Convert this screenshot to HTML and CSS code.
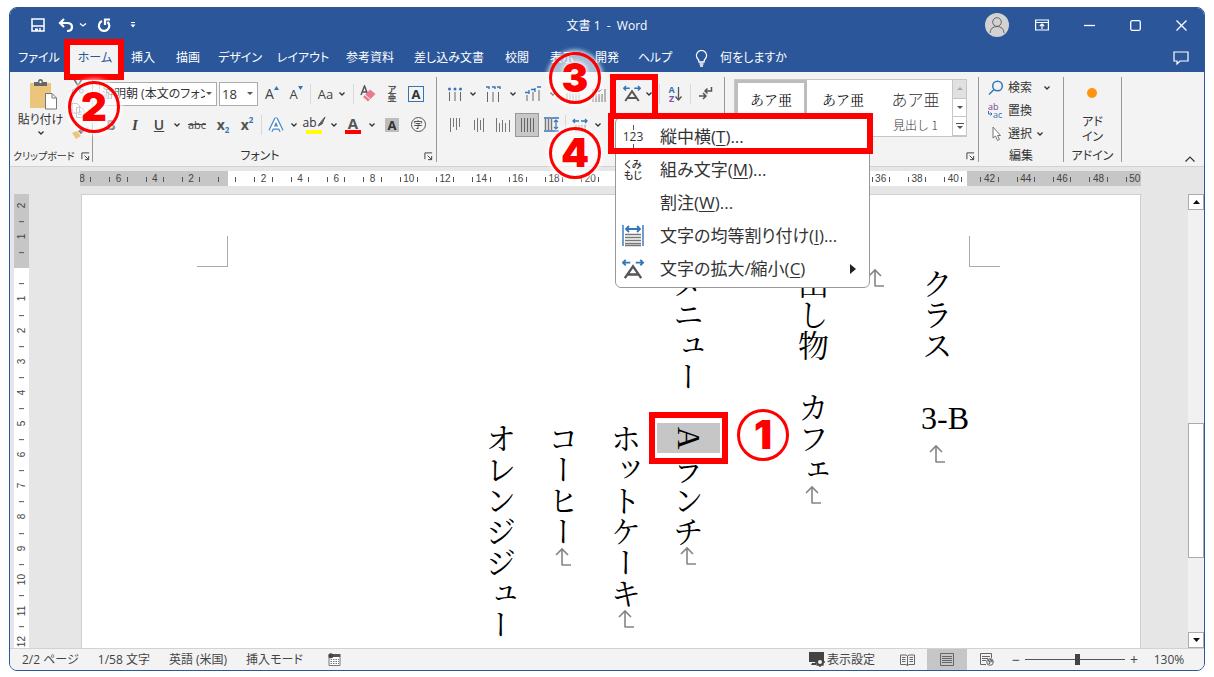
FILE: index.html
```html
<!DOCTYPE html>
<html lang="ja">
<head>
<meta charset="utf-8">
<title>文書 1 - Word</title>
<link rel="stylesheet" href="styles.css">
</head>
<body>
<svg class="defs" aria-hidden="true">
  <symbol id="chev" viewBox="0 0 8 6"><path d="M1.500 1.500L4 4L6.500 1.500" fill="none" stroke="#333" stroke-width="1.300"/></symbol>
  <symbol id="launch" viewBox="0 0 10 10"><path d="M1 8V1H9M4 4L8.500 8.500M8.500 4.500V8.500H4.500" fill="none" stroke="#444" stroke-width="1.100"/></symbol>
  <symbol id="mark" viewBox="0 0 18 20"><path d="M8 18V2M2 8L8 2L14 8M7.500 18H17" fill="none" stroke="#858585" stroke-width="1.600"/></symbol>
  <symbol id="wide" viewBox="0 0 24 22"><path d="M1 4H9M4 1L1 4L4 7M15 4H23M20 1L23 4L20 7" fill="none" stroke="#3375b8" stroke-width="2"/><path d="M3 21L12 8L21 21M6.500 17H17.500" fill="none" stroke="#555" stroke-width="2.600"/></symbol>
</svg>
<div class="window">
  <header class="titlebar">
    <div class="quick">
      <button aria-label="上書き保存"><svg width="14" height="14" viewBox="0 0 14 14" fill="none" stroke="#fff" stroke-width="1.500"><path d="M1 1H13V13H1ZM1 8H13"/><path d="M4 10.500H7V13H4Z" fill="#fff" stroke="none"/><path d="M9 10V13"/></svg></button>
      <button class="undo" aria-label="元に戻す"><svg width="16" height="14" viewBox="0 0 16 14" fill="none" stroke="#fff" stroke-width="2.200"><path d="M6 1L2 5L6 9M2 5H9Q14 5 14 9Q14 13 9 13"/></svg></button>
      <svg class="qchev" width="8" height="6" viewBox="0 0 8 6"><path d="M1 1.500L4 4L7 1.500" fill="none" stroke="#fff" stroke-width="1.300"/></svg>
      <button class="redo" aria-label="繰り返し"><svg width="14" height="15" viewBox="0 0 14 15" fill="none" stroke="#fff" stroke-width="2.200"><path d="M5 3A5.200 5.200 0 1 0 10.500 3.800M13 1.500H8V7"/></svg></button>
      <button class="custom" aria-label="クイック アクセスのカスタマイズ"><svg width="6" height="6" viewBox="0 0 6 6"><path d="M1 .5H5" stroke="#fff"/><path d="M.5 2.500H5.500L3 5.500Z" fill="#fff"/></svg></button>
    </div>
    <h1 class="doctitle">文書 1&nbsp; -&nbsp; Word</h1>
    <div class="wincontrols">
      <button class="avatar" aria-label="アカウント"><svg width="24" height="24" viewBox="0 0 24 24"><circle cx="12" cy="12" r="12" fill="#d2d2d2"/><circle cx="12" cy="9" r="4.300" fill="none" stroke="#666"/><path d="M5 20Q5.500 13.500 12 13.500T19 20" fill="none" stroke="#666"/></svg></button>
      <button aria-label="リボンの表示オプション"><svg width="14" height="12" viewBox="0 0 14 12" fill="none" stroke="#fff" stroke-width="1.200"><path d="M.6 1H13.400V11H.6ZM.6 3.500H13.400M7 10V5M4.800 7L7 5L9.200 7"/></svg></button>
      <button aria-label="最小化"><svg width="11" height="11" viewBox="0 0 11 11"><path d="M0 5.500H11" stroke="#fff" stroke-width="1.300"/></svg></button>
      <button aria-label="最大化"><svg width="11" height="11" viewBox="0 0 11 11"><rect x=".7" y=".7" width="9.600" height="9.600" rx="1.500" fill="none" stroke="#fff" stroke-width="1.300"/></svg></button>
      <button aria-label="閉じる"><svg width="11" height="11" viewBox="0 0 11 11"><path d="M.5 .5L10.500 10.500M10.500 .5L.5 10.500" stroke="#fff" stroke-width="1.300"/></svg></button>
    </div>
  </header>

  <nav class="tabs">
    <button>ファイル</button><button class="active">ホーム</button><button>挿入</button><button>描画</button><button>デザイン</button><button>レイアウト</button><button>参考資料</button><button>差し込み文書</button><button>校閲</button><button>表示</button><button>開発</button><button>ヘルプ</button>
    <button class="tell"><svg width="13" height="17" viewBox="0 0 13 17" fill="none" stroke="#fff" stroke-width="1.300"><path d="M4 12Q4 10 2.500 8.500A5 5 0 1 1 10.500 8.500Q9 10 9 12ZM4.500 14H8.500M5 16H8"/></svg>何をしますか</button>
    <button class="comment" aria-label="コメント"><svg width="16" height="14" viewBox="0 0 16 14" fill="none" stroke="#fff" stroke-width="1.200"><path d="M1 1H15V10H7L4 13V10H1Z"/></svg></button>
  </nav>

  <div class="ribbon">
    <section class="group clipboard">
      <div class="body">
        <button class="paste"><svg width="29" height="31" viewBox="0 0 29 31"><path d="M1 4H22V29H1Z" fill="#ecc57c"/><path d="M5 3H9Q9 0 11.500 0T14 3H18V7H5Z" fill="#666"/><circle cx="11.500" cy="3" r="1.200" fill="#f3f3f3"/><path d="M16.500 14.500H23L27.500 19V30H16.500Z" fill="#fff" stroke="#777"/><path d="M23 14.500V19H27.500" fill="none" stroke="#777"/></svg><span>貼り付け</span><svg class="chev"><use href="#chev"/></svg></button>
        <div class="clipside">
          <button aria-label="切り取り"><svg width="14" height="15" viewBox="0 0 14 15" fill="none"><path d="M3 0L9 10M11 0L5 10" stroke="#666" stroke-width="1.500"/><circle cx="3.500" cy="12" r="2" stroke="#3375b8"/><circle cx="10.500" cy="12" r="2" stroke="#3375b8"/></svg></button>
          <button aria-label="コピー"><svg width="14" height="15" viewBox="0 0 14 15" fill="#fff" stroke="#777"><path d="M1 .5H6L8.500 3V10H1ZM5.500 4.500H10L13 7.500V14.500H5.500Z"/><path d="M7.500 9H11M7.500 11.500H11" stroke="#3375b8"/></svg></button>
          <button aria-label="書式のコピー/貼り付け"><svg width="14" height="13" viewBox="0 0 14 13"><path d="M1 6L6 4L10 9L5 12Z" fill="#ecc57c"/><path d="M7 4L12 0L14 3L10 7Z" fill="#555"/></svg></button>
        </div>
      </div>
      <footer><span>クリップボード</span><svg class="launch"><use href="#launch"/></svg></footer>
    </section>

    <section class="group font">
      <div class="body rows">
        <div class="row">
          <select class="fname" aria-label="フォント"><option>游明朝 (本文のフォント)</option></select>
          <select class="fsize" aria-label="フォント サイズ"><option>18</option></select>
          <button class="t w24" aria-label="フォント サイズの拡大">A<svg class="car" width="5" height="4"><path d="M0 4L2.500 0L5 4Z" fill="#3375b8"/></svg></button>
          <button class="t w24 small" aria-label="フォント サイズの縮小">A<svg class="car" width="5" height="4"><path d="M0 0L2.500 4L5 0Z" fill="#3375b8"/></svg></button>
          <i class="sep"></i>
          <button class="t w38">Aa<svg class="chev"><use href="#chev"/></svg></button>
          <i class="sep"></i>
          <button class="w24" aria-label="書式のクリア"><svg width="16" height="18" viewBox="0 0 16 18"><path d="M1 10L4.500 1L8 10M2.500 7H6.500" fill="none" stroke="#555" stroke-width="1.500"/><path d="M3 12L10 4.500L15.500 9L8 16.500Z" fill="#e67c8c"/><path d="M5 10L10.500 14.500" stroke="#fff"/></svg></button>
          <button class="ruby w24" aria-label="ルビ"><span>ア</span><span>亜</span></button>
          <button class="w24" aria-label="囲み線"><span class="boxa">A</span></button>
        </div>
        <div class="row">
          <button class="t b w24">B</button><button class="t it w24">I</button><button class="t un w24">U</button><svg class="chev c12"><use href="#chev"/></svg>
          <button class="t st w28">abc</button><button class="t b w24">x<sub>2</sub></button><button class="t b w24">x<sup>2</sup></button>
          <i class="sep"></i>
          <button class="w24" aria-label="文字の効果"><svg width="16" height="16" viewBox="0 0 16 16"><path d="M2.500 14L8 2.500L13.500 14M5 10.500H11" fill="none" stroke="#4c88ca" stroke-width="4.500" stroke-linejoin="round"/><path d="M2.500 14L8 2.500L13.500 14M5 10.500H11" fill="none" stroke="#fff" stroke-width="2"/></svg></button><svg class="chev c12"><use href="#chev"/></svg>
          <button class="colorbtn w28 yellow">ab<svg width="9" height="11" viewBox="0 0 9 11"><path d="M8 1L3 7L1 10L5 8Z" fill="#666" stroke="#555"/></svg></button><svg class="chev c12"><use href="#chev"/></svg>
          <button class="colorbtn w26 red">A</button><svg class="chev c12"><use href="#chev"/></svg>
          <button class="w28" aria-label="文字の網かけ"><span class="shade">A</span></button>
          <button class="w24" aria-label="囲い文字"><span class="circ">字</span></button>
        </div>
      </div>
      <footer><span>フォント</span><svg class="launch"><use href="#launch"/></svg></footer>
    </section>

    <section class="group para">
      <div class="body rows">
        <div class="row">
          <button class="w24" aria-label="箇条書き"><svg width="16" height="14" viewBox="0 0 16 14"><path d="M2.500 5V14M8 5V14M13.500 5V14" stroke="#666"/><g fill="#3375b8"><circle cx="2.500" cy="2" r="1.500"/><circle cx="8" cy="2" r="1.500"/><circle cx="13.500" cy="2" r="1.500"/></g></svg></button><svg class="chev c12"><use href="#chev"/></svg>
          <button class="w28" aria-label="段落番号"><svg width="16" height="16" viewBox="0 0 16 16"><path d="M2.500 6V16M8 6V16M13.500 6V16" stroke="#666"/><path d="M1 1H4V3M7 1H10V3M12 1H15V3" fill="none" stroke="#3375b8" stroke-width="1.400"/></svg></button><svg class="chev c12"><use href="#chev"/></svg>
          <button class="w28" aria-label="アウトライン"><svg width="17" height="15" viewBox="0 0 17 15"><path d="M2 9V15M8 6V15M14 4V15" stroke="#666"/><path d="M0 6.500H4M6 3.500H10M12 1H16M4 4V8M10 2V6" stroke="#3375b8" stroke-width="1.300"/></svg></button><svg class="chev c12"><use href="#chev"/></svg>
          <button class="w28" aria-label="インデントを減らす"><svg width="16" height="16" viewBox="0 0 16 16"><path d="M2 7V16M5 7V16M8 7V16M11 7V16M14 7V16" stroke="#777"/><path d="M8 6V0M5.500 2.500L8 0L10.500 2.500" fill="none" stroke="#3375b8"/></svg></button>
          <button class="w24" aria-label="インデントを増やす"><svg width="16" height="16" viewBox="0 0 16 16"><path d="M2 3V16M5 8V16M8 8V16M11 8V16M14 3V16" stroke="#777"/><path d="M8 0V6M5.500 3.500L8 6L10.500 3.500" fill="none" stroke="#3375b8"/></svg></button>
          <button class="scale" aria-label="拡張書式"><svg width="18" height="17"><use href="#wide"/></svg><svg class="chev"><use href="#chev"/></svg></button>
          <i class="sep"></i>
          <button class="w26" aria-label="並べ替え"><span class="az"><span>A</span><span>Z</span></span><svg width="7" height="14" viewBox="0 0 7 14"><path d="M3.500 0V13M.5 9.500L3.500 13L6.500 9.500" fill="none" stroke="#555" stroke-width="1.300"/></svg></button>
          <i class="sep"></i>
          <button class="w24" aria-label="編集記号の表示"><svg width="15" height="13" viewBox="0 0 15 13"><path d="M13.500 0V4H7M9.500 1.500L7 4L9.500 6.500M1 9H8M5 6L8 9L5 12" fill="none" stroke="#555" stroke-width="1.500"/></svg></button>
        </div>
        <div class="row">
          <button class="w24" aria-label="上揃え"><svg width="10" height="14"><path d="M.5 0V14M3.500 0V9M6.500 0V12M9.500 0V9" stroke="#777"/></svg></button>
          <button class="w24" aria-label="上下中央揃え"><svg width="10" height="14"><path d="M.5 2V12M3.500 0V14M6.500 2V12M9.500 0V14" stroke="#777"/></svg></button>
          <button class="w24" aria-label="下揃え"><svg width="14" height="14"><path d="M.5 0V14M3.500 5V14M6.500 2V14M9.500 5V14M13.500 2V14" stroke="#777"/></svg></button>
          <button class="w24 on" aria-label="両端揃え"><svg width="13" height="14"><path d="M.5 0V14M3.500 0V14M6.500 0V14M9.500 0V14M12.500 0V14" stroke="#666"/></svg></button>
          <button class="w24" aria-label="均等割り付け"><svg width="15" height="15" viewBox="0 0 15 15"><path d="M0 1H15M0 14H15" stroke="#3375b8" stroke-width="1.400"/><path d="M1.500 2V13M4.500 2V13M7.500 2V13" stroke="#777" stroke-width="1.500"/><path d="M12 3V12M10 5L12 3L14 5M10 10L12 12L14 10" fill="none" stroke="#3375b8" stroke-width="1.200"/></svg></button>
          <i class="sep"></i>
          <button class="w24" aria-label="行と段落の間隔"><svg width="16" height="14" viewBox="0 0 16 14"><path d="M1 3H7M3 1L1 3L3 5M9 3H15M13 1L15 3L13 5" fill="none" stroke="#3375b8" stroke-width="1.300"/><path d="M4 7V14M7 7V14M10 7V14M13 7V14" stroke="#777"/></svg></button><svg class="chev c12"><use href="#chev"/></svg>
        </div>
      </div>
    </section>

    <section class="group styles">
      <div class="body">
        <div class="gallery">
          <button class="sel">あア亜</button>
          <button>あア亜</button>
          <button class="head">あア亜<small>見出し 1</small></button>
          <div class="gscroll">
            <button class="off" aria-label="前の行"><svg width="6" height="3"><path d="M0 3L3 0L6 3Z" fill="#aaa"/></svg></button>
            <button aria-label="次の行"><svg width="6" height="3"><path d="M0 0L3 3L6 0Z" fill="#555"/></svg></button>
            <button aria-label="その他"><svg width="8" height="7"><path d="M0 .5H8" stroke="#555"/><path d="M1 3H7L4 6Z" fill="#555"/></svg></button>
          </div>
        </div>
      </div>
      <footer><span></span><svg class="launch"><use href="#launch"/></svg></footer>
    </section>

    <section class="group edit">
      <div class="body list">
        <button><svg width="16" height="16" viewBox="0 0 16 16" fill="none" stroke="#3375b8" stroke-width="1.500"><circle cx="9.500" cy="6" r="4.800"/><path d="M6 9.500L1 14.500"/></svg>検索<svg class="chev far"><use href="#chev"/></svg></button>
        <button><span class="rep"><span>ab</span><span><svg width="5" height="5"><path d="M.5 0V3H4M2.500 1.500L4 3L2.500 4.500" fill="none" stroke="#3375b8"/></svg>ac</span></span>置換</button>
        <button><svg width="16" height="16" viewBox="0 0 16 16"><path d="M5 1V12L7.500 10L9.500 14.500L11.500 13.500L9.500 9.500H12.500Z" fill="#fff" stroke="#777"/></svg>選択<svg class="chev"><use href="#chev"/></svg></button>
      </div>
      <footer><span>編集</span></footer>
    </section>

    <section class="group addin">
      <div class="body"><button><svg width="12" height="12"><circle cx="6" cy="6" r="5" fill="#ff9410"/></svg><span>アド<br>イン</span></button></div>
      <footer><span>アドイン</span></footer>
    </section>
    <button class="collapse" aria-label="リボンを折りたたむ"><svg width="10" height="6"><path d="M.5 5.500L5 1L9.500 5.500" fill="none" stroke="#333" stroke-width="1.200"/></svg></button>
  </div>

  <div class="hruler"><div class="scaleh"><div class="hcells">
    <span>8</span><span>6</span><span>4</span><span>2</span><span></span><span>2</span><span>4</span><span>6</span><span>8</span><span>10</span><span>12</span><span>14</span><span>16</span><span>18</span><span>20</span><span></span><span></span><span></span><span></span><span></span><span></span><span></span><span>36</span><span>38</span><span>40</span><span>42</span><span>44</span><span>46</span><span>48</span><span>50</span>
  </div></div></div>

  <div class="workspace">
    <div class="vruler"><div class="vcells">
      <span>2</span><span>1</span><span></span><span>1</span><span>2</span><span>3</span><span>4</span><span>5</span><span>6</span><span>7</span><span>8</span><span>9</span><span>10</span><span>11</span><span>12</span>
    </div></div>
    <main class="page">
      <i class="crop cl"></i>
      <article class="text">
        <p>クラス　<span class="tcy">3-B</span><svg class="mark"><use href="#mark"/></svg></p>
        <p><svg class="mark"><use href="#mark"/></svg></p>
        <p>出し物　カフェ<svg class="mark"><use href="#mark"/></svg></p>
        <p></p>
        <p>メニュー　<span class="hl">A</span>ランチ<svg class="mark"><use href="#mark"/></svg></p>
        <p>　　　　　ホットケーキ<svg class="mark"><use href="#mark"/></svg></p>
        <p>　　　　　コーヒー<svg class="mark"><use href="#mark"/></svg></p>
        <p>　　　　　オレンジジュー</p>
      </article>
      <i class="crop cr"></i>
    </main>
    <div class="scrollbar">
      <button aria-label="上へ"><svg width="7" height="4"><path d="M0 4L3.500 0L7 4Z" fill="#111"/></svg></button>
      <div class="track"><div class="thumb"></div></div>
      <button aria-label="下へ"><svg width="7" height="4"><path d="M0 0L3.500 4L7 0Z" fill="#111"/></svg></button>
    </div>
  </div>

  <footer class="status">
    <span>2/2 ページ</span><span>1/58 文字</span><span>英語 (米国)</span><span>挿入モード</span>
    <svg class="macro" width="13" height="13" viewBox="0 0 13 13"><path d="M1 4V12.500H12V4" fill="#fff" stroke="#777"/><path d="M5 1H12.500V4H5Z" fill="#555"/><circle cx="2.800" cy="2.800" r="2.500" fill="#444"/><path d="M2.500 6.500H11M2.500 8.500H11M2.500 10.500H11" stroke="#777" stroke-dasharray="1.500 1"/></svg>
    <button class="disp"><svg width="16" height="15" viewBox="0 0 16 15"><path d="M0 0H15V10H0ZM3 11H7V13H2Z" fill="#444"/><circle cx="11" cy="10" r="3" fill="#f3f3f3" stroke="#444" stroke-width="2"/><path d="M11 5V7M11 13V15M6 10H8M14 10H16M7.500 6.500L9 8M13 12L14.500 13.500M14.500 6.500L13 8M9 12L7.500 13.500" stroke="#444" stroke-width="1.400"/></svg>表示設定</button>
    <button class="view" aria-label="閲覧モード"><svg width="15" height="12" viewBox="0 0 15 12" fill="none" stroke="#666"><path d="M.5 1H6L7.500 2L9 1H14.500V10.500H9L7.500 11.500L6 10.500H.5ZM7.500 2V11.500M2 3.500H5.500M2 5.500H5.500M2 7.500H5.500M9.500 3.500H13M9.500 5.500H13M9.500 7.500H13"/></svg></button>
    <button class="view cur" aria-label="印刷レイアウト"><svg width="14" height="13" fill="none" stroke="#666"><path d="M.5 .5H13.500V12.500H.5ZM2 3.500H12M2 5.500H12M2 7.500H12M2 9.500H12"/></svg></button>
    <button class="view" aria-label="Web レイアウト"><svg width="14" height="13" viewBox="0 0 14 13" fill="none" stroke="#666"><path d="M6 11.500H.5V.5H11.500V5M2 3.500H10M2 5.500H8M2 7.500H6"/><circle cx="10" cy="9" r="3.300" fill="#f3f3f3"/><path d="M8 7L10 9L9 11M10 6L12.500 9" stroke-width="1.300"/></svg></button>
    <button class="pm" aria-label="縮小">−</button>
    <input class="zoom" type="range" min="0" max="100" value="53" aria-label="ズーム">
    <button class="pm" aria-label="拡大">+</button>
    <button class="pct">130%</button>
  </footer>

  <div class="menu" role="menu">
    <button role="menuitem"><span class="ic n123">123</span>縦中横(<u>T</u>)...</button>
    <button role="menuitem"><span class="ic kumi">くみ<br>もじ</span>組み文字(<u>M</u>)...</button>
    <button role="menuitem"><span class="ic"></span>割注(<u>W</u>)...</button>
    <button role="menuitem"><span class="ic"><svg width="22" height="22" viewBox="0 0 22 22"><path d="M1 0V21M21 0V21" stroke="#3375b8" stroke-width="1.400"/><path d="M4 4H18M7 1L4 4L7 7M15 1L18 4L15 7" fill="none" stroke="#3375b8" stroke-width="1.800"/><path d="M3 9.500H19M3 12.500H19M3 15.500H19M3 18.500H19M3 20.500H19" stroke="#777" stroke-width="1.300"/></svg></span>文字の均等割り付け(<u>I</u>)...</button>
    <button role="menuitem"><span class="ic"><svg width="22" height="20"><use href="#wide"/></svg></span>文字の拡大/縮小(<u>C</u>)<svg class="sub" width="6" height="10"><path d="M0 0L6 5L0 10Z" fill="#222"/></svg></button>
  </div>

  <div class="frame f1"></div><div class="frame f2"></div><div class="frame f3"></div><div class="frame f4"></div>
  <div class="num n1">1</div><div class="num n2">2</div><div class="num n3">3</div><div class="num n4">4</div>
</div>
</body>
</html>
```

FILE: styles.css
```css
* { box-sizing: border-box; }
html, body { height: 100%; }
body {
  margin: 0;
  padding: 7px 9px 6px;
  background: #fff;
  color: #333;
  font: 12px/16px "Open Sans", "Noto Sans CJK JP", sans-serif;
  font-feature-settings: "palt";
}
.defs { position: absolute; width: 0; height: 0; }
button { border: 0; padding: 0; margin: 0; background: none; color: inherit; font: inherit; font-feature-settings: inherit; white-space: nowrap; }
svg { flex: none; display: block; }

.window {
  position: relative;
  display: flex;
  flex-direction: column;
  height: 100%;
  border: 1px solid #2b579a;
  border-radius: 8px;
  background: #e6e6e6;
}

/* title bar */
.titlebar { display: grid; grid-template-columns: 1fr auto 1fr; align-items: center; height: 34px; background: #2b579a; color: #fff; border-radius: 7px 7px 0 0; }
.quick { display: flex; align-items: center; padding-left: 21px; }
.undo { margin-left: 13px; }
.qchev { margin-left: 5px; }
.redo { margin-left: 10px; }
.custom { margin-left: 19px; }
.doctitle { margin: 2px 0 0; font-size: 12px; font-weight: 400; }
.wincontrols { display: flex; justify-content: flex-end; align-items: center; padding-right: 17px; gap: 35px; }
.wincontrols .avatar { margin-right: -9px; }

/* tabs */
.tabs { display: grid; grid-template-columns: 58px 54px 42px 48px 56px 70px 64px 94px 42px 48px 42px 54px 118px 1fr; height: 30px; background: #2b579a; color: #fff; }
.tabs button { display: flex; align-items: center; justify-content: center; padding-top: 2px; }
.tabs .active { background: #f3f3f3; color: #2b579a; }
.tabs .tell { gap: 12px; }
.tabs .comment { justify-content: flex-end; padding-right: 15px; }

/* ribbon */
.ribbon { display: flex; height: 95px; padding: 5px 0 4px; background: #f3f3f3; border-bottom: 1px solid #d2d2d2; }
.group { display: flex; flex-direction: column; border-right: 1px solid #999; }
.group .body { flex: 1; display: flex; min-height: 0; }
.group footer { display: flex; height: 12px; padding: 0 3px; align-items: center; }
.group footer span { flex: 1; text-align: center; }
.launch { width: 9px; height: 9px; }
.chev { width: 8px; height: 6px; }
.c12 { margin: 0 2px; }
.clipboard { width: 83px; }
.clipboard footer { padding: 0 2px 0 3px; font-size: 10px; }
.clipboard footer span { white-space: nowrap; text-align: left; }
.paste { display: flex; flex-direction: column; align-items: center; width: 61px; padding: 2px 0 0; gap: 2px; }
.paste > svg:first-child { margin-left: 5px; }
.clipside { display: flex; flex-direction: column; gap: 9px; padding-top: 2px; }
.font { width: 344px; }
.para { width: 288px; }
.rows { flex-direction: column; padding-left: 6px; gap: 6px; padding-top: 4px; }
.row { display: flex; align-items: center; height: 25px; }
.row button { display: flex; align-items: center; justify-content: center; height: 24px; }
.w24 { width: 24px; }
.w26 { width: 26px; }
.w28 { width: 28px; }
.w38 { width: 38px; gap: 5px; }
.sep { width: 1px; height: 20px; margin: 0 2px; background: #d8d8d8; }
select { appearance: none; height: 24px; border: 1px solid #ababab; border-radius: 0; padding: 0 11px 0 2px; color: #333; font: 12px/16px "Open Sans", "Noto Sans CJK JP", sans-serif; font-feature-settings: "palt"; text-overflow: clip; background: url("data:image/svg+xml,%3Csvg xmlns='http://www.w3.org/2000/svg' width='6' height='3'%3E%3Cpath d='M0 0H6L3 3Z' fill='%23555'/%3E%3C/svg%3E") no-repeat right 4px center #fff; }
.fname { width: 118px; margin-right: 2px; }
.fsize { width: 39px; margin-right: 2px; font-size: 13px; }
.t { font-size: 14px; color: #444; }
.t.small { font-size: 13px; }
.t.w38 { font-size: 13px; }
.car { align-self: flex-start; margin-top: 4px; }
.ruby { flex-direction: column; font-size: 9px; line-height: 8px; font-weight: 700; color: #555; }
.boxa { width: 16px; height: 16px; border: 1px solid #3375b8; font: 700 13px/14px "Open Sans", sans-serif; }
.b { font-weight: 700; color: #555; }
.it { font: italic 700 15px/16px "Liberation Serif", serif; }
.un { font-weight: 600; text-decoration: underline; }
.t.st { font-size: 11px; text-decoration: line-through; }
.t sub, .t sup { font-size: 8px; line-height: 8px; color: #3375b8; }
.t sub { align-self: flex-end; margin-bottom: 3px; }
.t sup { align-self: flex-start; margin-top: 3px; }
.row .colorbtn { height: 18px; border: solid #f3f3f3; border-width: 0 6px; font-size: 12px; line-height: 14px; align-items: flex-start; box-shadow: inset 0 -4px #ff0; }
.row .red { box-shadow: inset 0 -4px #f00; font-size: 15px; font-weight: 700; border-width: 0 5px; color: #555; }
.shade { width: 14px; background: #bdbdbd; font: 700 13px/14px "Open Sans", sans-serif; }
.circ { width: 15px; height: 15px; border: 1px solid #555; border-radius: 50%; font-size: 9px; line-height: 13px; }
.on { background: #c8c8c8; outline: 1px solid #999; outline-offset: -1px; }
.scale { width: 46px; gap: 4px; }
.row .scale { padding-left: 8px; }
.az { display: flex; flex-direction: column; font-size: 9px; line-height: 9px; font-weight: 700; color: #3375b8; }
.az span + span { color: #8a4fa8; }
.styles { width: 254px; }
.gallery { display: grid; grid-template-columns: 72px 72px 73px 14px; height: 58px; margin: 2px 0 0 9px; border: 1px solid #c6c6c6; background: #fff; }
.gallery > button { display: flex; flex-direction: column; align-items: center; padding-top: 11px; font-family: "Noto Serif CJK JP", "Noto Sans CJK JP", serif; font-size: 14px; font-feature-settings: normal; color: #111; }
.gallery .sel { border: 3px solid #bdbdbd; padding-top: 8px; }
.gallery .head { font-family: "Noto Sans CJK JP", sans-serif; font-weight: 300; font-size: 16px; color: #333; gap: 10px; }
.head small { font-size: 12px; }
.gscroll { display: grid; grid-template-rows: 1fr 1fr 1fr; border-left: 1px solid #c6c6c6; }
.gscroll button { display: grid; place-items: center; border-bottom: 1px solid #c6c6c6; }
.gscroll .off { background: #e1e1e1; }
.edit { width: 85px; }
.list { flex-direction: column; padding: 3px 0 0 9px; gap: 7px; }
.list button { display: flex; align-items: center; gap: 4px; height: 16px; }
.list .far { margin-left: 7px; }
.rep { display: flex; flex-direction: column; width: 16px; font-size: 9px; line-height: 8px; color: #7b3f98; text-align: left; }
.rep span { display: flex; }
.rep span + span { color: #3375b8; }
.addin { width: 58px; }
.addin .body { justify-content: center; }
.addin button { display: flex; flex-direction: column; align-items: center; gap: 15px; padding-top: 10px; line-height: 15px; }
.collapse { margin-left: auto; align-self: flex-end; padding: 0 9px 0 0; }

/* rulers */
.hruler { padding: 4px 63px 8px 70px; }
.scaleh { overflow: hidden; height: 15px; background: linear-gradient(90deg, #c6c6c6 148px, #fff 148px, #fff calc(100% - 174px), #c6c6c6 calc(100% - 174px)); }
.hcells { display: flex; margin: 0 -12px 0 -16px; color: #444; font: 10px/16px "Liberation Sans", sans-serif; }
.hcells span { flex: 1; display: flex; justify-content: space-between; align-items: center; padding: 0 9px; }
.hcells span::before, .hcells span::after { content: ""; width: 1px; height: 5px; background: #555; }
.workspace { flex: 1; display: flex; min-height: 0; }
.vruler { width: 15px; margin: 0 52px 0 4px; overflow: hidden; background: linear-gradient(#c6c6c6 74px, #fff 74px); }
.vcells { display: flex; flex-direction: column; height: calc(100% + 13px); margin-top: -4px; color: #444; font: 10px/16px "Liberation Sans", sans-serif; }
.vcells span { position: relative; flex: 1; writing-mode: vertical-rl; transform: rotate(180deg); text-align: center; }
.vcells span::after { content: ""; position: absolute; left: 5px; bottom: 0; width: 5px; height: 1px; background: #555; }

/* document page */
.page { flex: 1; display: flex; align-items: flex-start; border: 1px solid #cfcfcf; border-bottom: 0; background: #fff; overflow: hidden; }
.crop { flex: none; width: 31px; height: 31px; margin-top: 41px; border-bottom: 1px solid #aaa; }
.cl { margin-left: 115px; border-right: 1px solid #aaa; }
.cr { margin-right: 140px; border-left: 1px solid #aaa; }
.text { display: flex; flex-direction: row-reverse; width: 500px; height: 380px; margin: 73px 0 0 auto; font: 400 31px/62px "Noto Serif CJK JP", "Noto Sans CJK JP", serif; font-feature-settings: normal; color: #000; }
.text p { flex: 1 1 0; min-width: 0; margin: 0; writing-mode: vertical-rl; white-space: pre; }
.tcy { display: inline-block; writing-mode: horizontal-tb; width: 48px; text-align: center; font: 400 32px/52px "Liberation Serif", serif; vertical-align: middle; }
.hl { padding: 4px 14px; background: #c6c6c6; font-family: "Liberation Serif", serif; }
.mark { display: inline-block; width: 18px; height: 20px; }
.scrollbar { display: flex; flex-direction: column; width: 16px; margin-left: 47px; background: #f1f1f1; }
.scrollbar button { display: grid; place-items: center; height: 16px; border: 1px solid #ababab; background: #fff; }
.track { flex: 1; display: flex; flex-direction: column; }
.thumb { height: 32%; margin-top: 213px; border: 1px solid #ababab; background: #fff; }

/* status bar */
.status { display: flex; align-items: center; height: 22px; padding: 0 18px 0 12px; border-top: 1px solid #d2d2d2; border-radius: 0 0 7px 7px; background: #f3f3f3; color: #444; white-space: nowrap; }
.status > span { margin-right: 19px; }
.macro { margin-left: 6px; }
.disp { display: flex; gap: 2px; align-items: center; margin: 0 12px 0 auto; }
.view { display: grid; place-items: center; width: 40px; height: 21px; }
.cur { background: #c6c6c6; }
.pm { width: 18px; font-size: 14px; }
.zoom { appearance: none; width: 100px; height: 16px; margin: 0; background: linear-gradient(#555, #555) center / 100% 1px no-repeat; }
.zoom::-webkit-slider-thumb { appearance: none; width: 5px; height: 11px; background: #444; }
.pct { margin-left: 9px; width: 34px; }

/* drop-down menu */
.menu { position: absolute; left: 605px; top: 109px; width: 255px; padding: 2px 0; border: 1px solid #999; border-radius: 6px; background: #fff; }
.menu button { display: flex; align-items: center; width: 100%; height: 33px; font-size: 17px; color: #333; }
.menu u { text-underline-offset: 2px; }
.ic { flex: none; display: grid; place-items: center; width: 34px; height: 30px; margin-right: 10px; }
.n123 { height: 24px; font-size: 12px; line-height: 14px; background: linear-gradient(#555, #555) 50% 0 / 1px 5px no-repeat, linear-gradient(#555, #555) 50% 100% / 1px 5px no-repeat; }
.kumi { font-size: 10px; line-height: 11px; font-weight: 500; }
.sub { margin-left: auto; margin-right: 13px; }

/* step callouts */
.frame { position: absolute; border: 6px solid #f00; }
.f1 { left: 639px; top: 404px; width: 79px; height: 52px; }
.f2 { left: 54px; top: 31px; width: 60px; height: 41px; }
.f3 { left: 600px; top: 66px; width: 48px; height: 45px; }
.f4 { left: 598px; top: 105px; width: 265px; height: 41px; }
.num { position: absolute; width: 52px; height: 52px; border: 3px solid #f00; border-radius: 50%; background: rgba(255,255,255,.6); box-shadow: 0 0 4px 2px rgba(255,255,255,.8); color: #f00; font: 900 40px/46px Inter, sans-serif; text-align: center; text-shadow: 0 0 4px #fff, 0 0 6px #fff; }
.n1 { left: 727px; top: 401px; }
.n2 { left: 58px; top: 73px; }
.n3 { left: 539px; top: 44px; }
.n4 { left: 539px; top: 119px; }
```
